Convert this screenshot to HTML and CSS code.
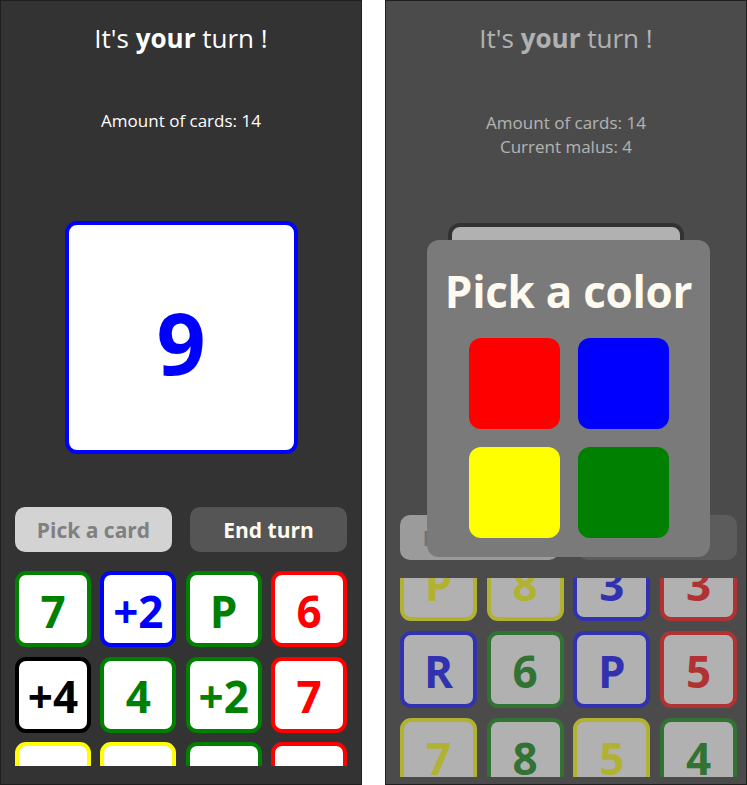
FILE: index.html
```html
<!DOCTYPE html>
<html lang="en">
<head>
<meta charset="utf-8">
<title>It's your turn</title>
<link rel="stylesheet" href="styles.css">
</head>
<body>
<div class="screens">
  <section class="screen">
    <h1 class="title">It's <b>your</b> turn !</h1>
    <div class="info">
      <p>Amount of cards: 14</p>
    </div>
    <div class="top-card c-blue"><span>9</span></div>
    <div class="actions">
      <button class="btn btn-pick">Pick a card</button>
      <button class="btn btn-end">End turn</button>
    </div>
    <div class="hand">
      <div class="hand-grid">
        <div class="card c-green">7</div>
        <div class="card c-blue">+2</div>
        <div class="card c-green">P</div>
        <div class="card c-red">6</div>
        <div class="card c-black">+4</div>
        <div class="card c-green">4</div>
        <div class="card c-green">+2</div>
        <div class="card c-red">7</div>
        <div class="card c-yellow"></div>
        <div class="card c-yellow"></div>
        <div class="card c-green"></div>
        <div class="card c-red"></div>
      </div>
    </div>
  </section>

  <section class="screen screen--picking">
    <h1 class="title">It's <b>your</b> turn !</h1>
    <div class="info">
      <p>Amount of cards: 14</p>
      <p>Current malus: 4</p>
    </div>
    <div class="top-card c-black"></div>
    <div class="actions">
      <button class="btn btn-pick">Pick a card</button>
      <button class="btn btn-end">End turn</button>
    </div>
    <div class="hand">
      <div class="hand-grid">
        <div class="card c-yellow">P</div>
        <div class="card c-yellow">8</div>
        <div class="card c-blue">3</div>
        <div class="card c-red">3</div>
        <div class="card c-blue">R</div>
        <div class="card c-green">6</div>
        <div class="card c-blue">P</div>
        <div class="card c-red">5</div>
        <div class="card c-yellow">7</div>
        <div class="card c-green">8</div>
        <div class="card c-yellow">5</div>
        <div class="card c-green">4</div>
      </div>
    </div>
    <div class="overlay"></div>
    <div class="color-modal">
      <h2 class="modal-title">Pick a color</h2>
      <div class="swatches">
        <button class="swatch sw-red" aria-label="red"></button>
        <button class="swatch sw-blue" aria-label="blue"></button>
        <button class="swatch sw-yellow" aria-label="yellow"></button>
        <button class="swatch sw-green" aria-label="green"></button>
      </div>
    </div>
  </section>
</div>
</body>
</html>
```

FILE: styles.css
```css
html, body {
  margin: 0;
  padding: 0;
  background: #ffffff;
  font-family: "Open Sans", "Noto Sans", sans-serif;
}

.screens {
  display: flex;
  gap: 23px;
  height: 785px;
}

.screen {
  position: relative;
  width: 362px;
  height: 785px;
  box-sizing: border-box;
  border: 1px solid #1f1f1f;
  background: #333333;
  color: #ffffff;
  display: flex;
  flex-direction: column;
  overflow: hidden;
}

.title {
  margin: 21px 0 0;
  font-size: 26px;
  line-height: 32px;
  font-weight: 400;
  text-align: center;
}

.title b {
  font-weight: 700;
}

.info {
  margin-top: 55px;
  font-size: 17px;
  line-height: 24px;
  text-align: center;
}

.info p {
  margin: 0;
}

.top-card {
  margin: 88px auto 0;
  width: 233px;
  height: 233px;
  flex: none;
  box-sizing: border-box;
  border: 4px solid currentColor;
  border-radius: 12px;
  background: #ffffff;
  display: flex;
  align-items: center;
  justify-content: center;
  padding-top: 8px;
  font-weight: 700;
  font-size: 86px;
}

.actions {
  margin-top: 53px;
  display: flex;
  gap: 18px;
  padding: 0 14px;
}

.btn {
  flex: 1;
  height: 45px;
  border: 0;
  border-radius: 10px;
  padding: 0;
  font-family: inherit;
  font-weight: 700;
  font-size: 21px;
}

.btn-pick {
  background: #d3d3d3;
  color: #808080;
}

.btn-end {
  background: #555555;
  color: #fffaf0;
}

.hand {
  margin-top: 19px;
  height: 195px;
  flex: none;
  overflow: hidden;
}

.hand-grid {
  display: grid;
  grid-template-columns: repeat(4, 76px);
  grid-auto-rows: 76px;
  column-gap: 9.33px;
  row-gap: 9.5px;
  padding: 0 14px;
}

.card {
  box-sizing: border-box;
  border: 4px solid currentColor;
  border-radius: 11px;
  background: #ffffff;
  display: flex;
  align-items: center;
  justify-content: center;
  padding-top: 3px;
  font-weight: 700;
  font-size: 44px;
}

.c-green { color: #008000; }
.c-blue { color: #0000ff; }
.c-red { color: #ff0000; }
.c-yellow { color: #ffff00; }
.c-black { color: #000000; }

/* second screen: colour picker open */
.screen--picking .info {
  margin-top: 57px;
}

.screen--picking .top-card {
  margin-top: 64px;
  width: 236px;
  height: 236px;
}

.screen--picking .actions {
  margin-top: 56px;
  gap: 19px;
  padding: 0 9px 0 14px;
}

.screen--picking .hand {
  margin-top: 18px;
  height: 199px;
}

.screen--picking .hand-grid {
  margin-top: -34px;
  grid-template-columns: repeat(4, 77px);
  grid-auto-rows: 77px;
  column-gap: 9.67px;
  row-gap: 10px;
}

.overlay {
  position: absolute;
  inset: 0;
  background: rgba(100, 100, 100, 0.5);
}

.color-modal {
  position: absolute;
  left: 41px;
  top: 239px;
  width: 283px;
  height: 317px;
  box-sizing: border-box;
  padding-top: 25px;
  background: #7a7a7a;
  border-radius: 12px;
  text-align: center;
}

.modal-title {
  margin: 0;
  font-size: 44px;
  line-height: 52px;
  font-weight: 700;
  letter-spacing: -0.3px;
  color: #fffaf0;
}

.swatches {
  margin: 21px auto 0;
  width: 200px;
  display: grid;
  grid-template-columns: repeat(2, 91px);
  grid-auto-rows: 91px;
  gap: 18px;
}

.swatch {
  border: 0;
  padding: 0;
  border-radius: 12px;
}

.sw-red { background: #ff0000; }
.sw-blue { background: #0000ff; }
.sw-yellow { background: #ffff00; }
.sw-green { background: #008000; }
```
